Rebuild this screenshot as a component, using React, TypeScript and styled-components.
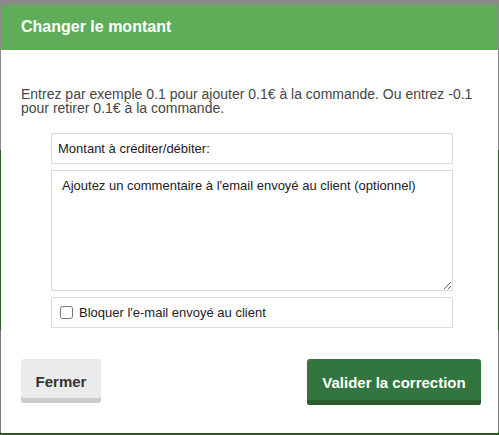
import styled, { createGlobalStyle } from 'styled-components'

const Global = createGlobalStyle`
    html, body {
        margin: 0;
        padding: 0;
    }
    body {
        width: 499px;
        height: 435px;
        overflow: hidden;
        background: linear-gradient(to bottom, #8a8a8a 0, #8a8a8a 150px, #2d5a22 150px, #2d5a22 330px, #7a7a7a 330px, #7a7a7a 432px, #2d5a22 432px);
        font-family: "Liberation Sans", Arial, sans-serif;
    }
`

const App = () => {
    return (
        <>
            <Global />
            <Modal>
                <Header>Changer le montant</Header>
                <Body>
                    <Hint>
                        Entrez par exemple 0.1 pour ajouter 0.1€ à la commande. Ou entrez -0.1 pour retirer 0.1€ à la commande.
                    </Hint>
                    <Form>
                        <AmountInput placeholder="Montant à créditer/débiter:" />
                        <Comment placeholder="Ajoutez un commentaire à l'email envoyé au client (optionnel)" />
                        <CheckRow>
                            <input type="checkbox" />
                            <span>Bloquer l'e-mail envoyé au client</span>
                        </CheckRow>
                    </Form>
                </Body>
                <Footer>
                    <Button>Fermer</Button>
                    <Button primary>Valider la correction</Button>
                </Footer>
            </Modal>
        </>
    )
}

const Modal = styled.div`
    margin: 5px 1px 0 1px;
    width: 497px;
    height: 428px;
    background: #fff;
    display: flex;
    flex-direction: column;
`

const Header = styled.div`
    height: 45px;
    background: #60ad59;
    color: #fff;
    font-weight: bold;
    font-size: 16px;
    display: flex;
    align-items: center;
    padding-left: 20px;
    padding-bottom: 1px;
    box-sizing: border-box;
`

const Body = styled.div`
    padding: 37px 20px 0 20px;
`

const Hint = styled.p`
    margin: 0;
    font-size: 14px;
    line-height: 14px;
    color: #454545;
`

const Form = styled.div`
    width: 402px;
    margin: 18px 0 0 30px;
    display: flex;
    flex-direction: column;
    gap: 6px;
`

const AmountInput = styled.input`
    box-sizing: border-box;
    width: 100%;
    height: 31px;
    border: 1px solid #dcdcdc;
    padding: 0 6px;
    font-family: "Liberation Sans", Arial, sans-serif;
    font-size: 13px;
    color: #222;
    outline: none;
    &::placeholder {
        color: #222;
    }
`

const Comment = styled.textarea`
    box-sizing: border-box;
    width: 100%;
    height: 121px;
    border: 1px solid #dcdcdc;
    padding: 7px 10px;
    font-family: "Liberation Sans", Arial, sans-serif;
    font-size: 13px;
    color: #222;
    outline: none;
    resize: vertical;
    margin: 0;
    display: block;
    &::placeholder {
        color: #222;
    }
`

const CheckRow = styled.label`
    box-sizing: border-box;
    height: 31px;
    border: 1px solid #dcdcdc;
    display: flex;
    align-items: center;
    gap: 6px;
    padding-left: 8px;
    font-size: 13px;
    color: #222;
    input {
        margin: 0;
        width: 13px;
        height: 13px;
    }
`

const Footer = styled.div`
    display: flex;
    justify-content: space-between;
    align-items: flex-start;
    padding: 31px 17px 0 20px;
`

const Button = styled.button<{ primary?: boolean }>`
    font-family: "Liberation Sans", Arial, sans-serif;
    font-weight: bold;
    font-size: 15px;
    border: none;
    border-radius: 3px;
    cursor: pointer;
    padding: 0;
    height: ${p => (p.primary ? '46px' : '44px')};
    width: ${p => (p.primary ? '174px' : '80px')};
    padding-top: ${p => (p.primary ? '1px' : '0')};
    background: ${p => (p.primary ? '#33753f' : '#ebebeb')};
    color: ${p => (p.primary ? '#fff' : '#333')};
    box-shadow: inset 0 -5px 0 ${p => (p.primary ? '#2c5d31' : '#cccccc')};
`

export default App
